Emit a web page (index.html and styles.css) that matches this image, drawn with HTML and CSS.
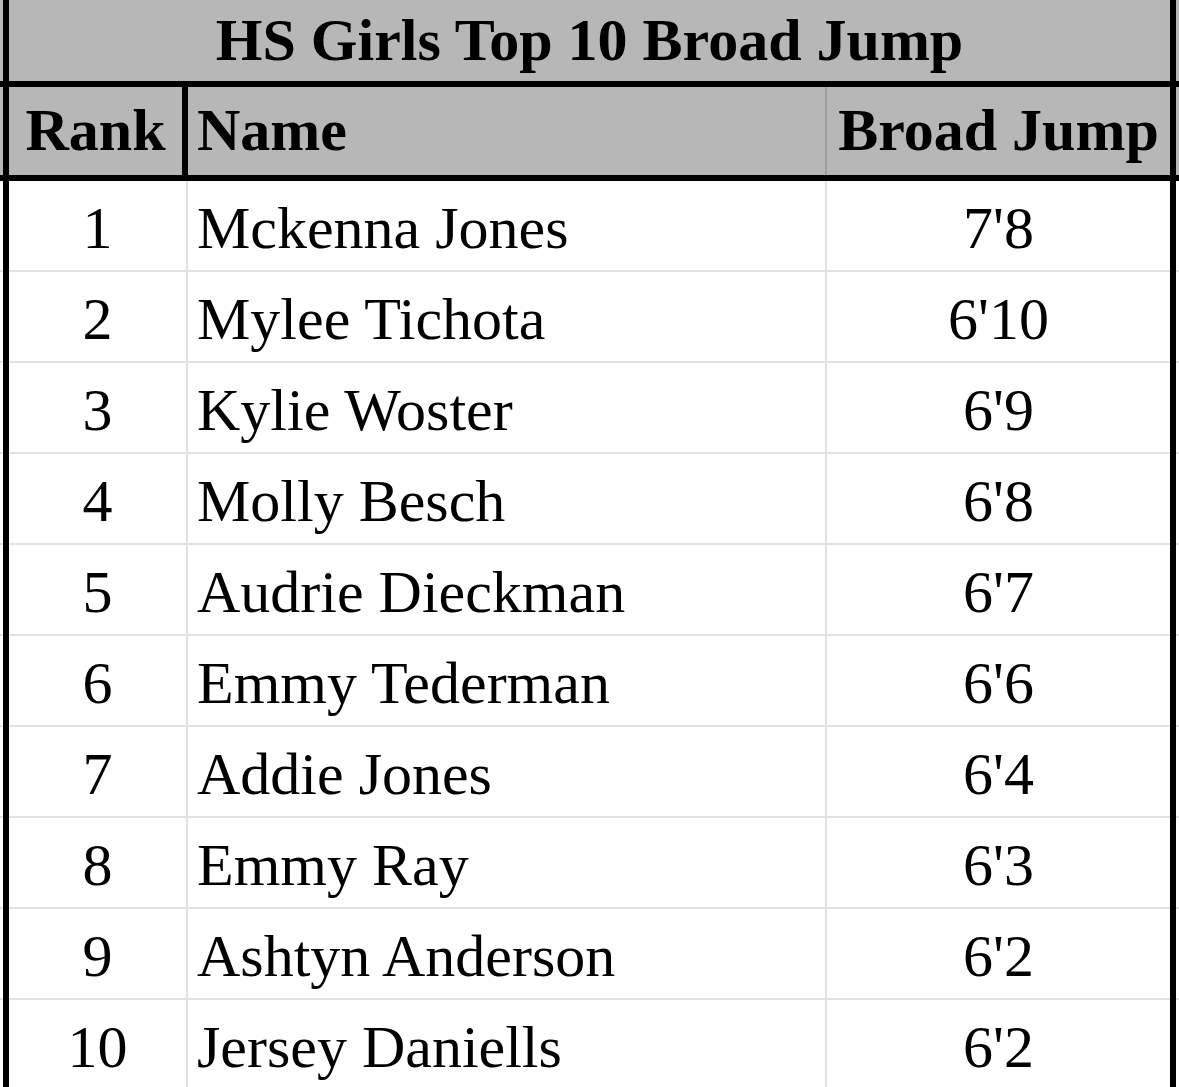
FILE: index.html
```html
<!DOCTYPE html>
<html lang="en">
<head>
<meta charset="utf-8">
<title>HS Girls Top 10 Broad Jump</title>
<link rel="stylesheet" href="styles.css">
</head>
<body>
<div class="sheet">
  <div class="row row-title">
    <div class="inner">
      <div class="cell cell-title">HS Girls Top 10 Broad Jump</div>
    </div>
  </div>
  <div class="row row-head">
    <div class="inner grid">
      <div class="cell head c-rank">Rank</div>
      <div class="cell head c-name">Name</div>
      <div class="cell head c-jump">Broad Jump</div>
    </div>
  </div>
  <div class="row row-data"><div class="inner grid"><div class="cell c-rank">1</div><div class="cell c-name">Mckenna Jones</div><div class="cell c-jump">7'8</div></div></div>
  <div class="row row-data"><div class="inner grid"><div class="cell c-rank">2</div><div class="cell c-name">Mylee Tichota</div><div class="cell c-jump">6'10</div></div></div>
  <div class="row row-data"><div class="inner grid"><div class="cell c-rank">3</div><div class="cell c-name">Kylie Woster</div><div class="cell c-jump">6'9</div></div></div>
  <div class="row row-data"><div class="inner grid"><div class="cell c-rank">4</div><div class="cell c-name">Molly Besch</div><div class="cell c-jump">6'8</div></div></div>
  <div class="row row-data"><div class="inner grid"><div class="cell c-rank">5</div><div class="cell c-name">Audrie Dieckman</div><div class="cell c-jump">6'7</div></div></div>
  <div class="row row-data"><div class="inner grid"><div class="cell c-rank">6</div><div class="cell c-name">Emmy Tederman</div><div class="cell c-jump">6'6</div></div></div>
  <div class="row row-data"><div class="inner grid"><div class="cell c-rank">7</div><div class="cell c-name">Addie Jones</div><div class="cell c-jump">6'4</div></div></div>
  <div class="row row-data"><div class="inner grid"><div class="cell c-rank">8</div><div class="cell c-name">Emmy Ray</div><div class="cell c-jump">6'3</div></div></div>
  <div class="row row-data"><div class="inner grid"><div class="cell c-rank">9</div><div class="cell c-name">Ashtyn Anderson</div><div class="cell c-jump">6'2</div></div></div>
  <div class="row row-data"><div class="inner grid"><div class="cell c-rank">10</div><div class="cell c-name">Jersey Daniells</div><div class="cell c-jump">6'2</div></div></div>
</div>
</body>
</html>
```

FILE: styles.css
```css
html, body {
  margin: 0;
  padding: 0;
  background: #ffffff;
  height: 1087px;
  overflow: hidden;
}

.sheet {
  width: 1179px;
  font-family: "Liberation Serif", "Times New Roman", serif;
  font-size: 60px;
  line-height: 60px;
  color: #000;
}

.row {
  box-sizing: border-box;
  padding: 0 3px;
}

.inner {
  box-sizing: border-box;
  height: 100%;
  border-left: 6px solid #000;
  border-right: 6px solid #000;
}

.grid {
  display: grid;
  grid-template-columns: 179px 639px 343px;
}

.cell {
  box-sizing: border-box;
  display: flex;
  align-items: flex-end;
  white-space: nowrap;
}

/* title row */
.row-title {
  height: 87px;
  background: #b7b7b7;
  border-bottom: 6px solid #000;
}

.cell-title {
  height: 100%;
  justify-content: center;
  font-weight: bold;
  padding-bottom: 11px;
}

/* header row */
.row-head {
  height: 94px;
  background: #b7b7b7;
  border-bottom: 6px solid #000;
}

.head {
  font-weight: bold;
  padding-bottom: 15px;
}

.row-head .c-rank {
  border-right: 6px solid #000;
}

.row-head .c-name {
  border-right: 2px solid #9e9e9e;
}

/* data rows */
.row-data {
  height: 91px;
  background: linear-gradient(to top, #e2e2e2 2px, #ffffff 2px);
}

.row-data .cell {
  padding-bottom: 12px;
  border-bottom: 2px solid #e2e2e2;
}

.row-data .c-rank,
.row-data .c-name {
  border-right: 2px solid #e2e2e2;
}

.c-rank {
  justify-content: center;
}

.c-name {
  justify-content: flex-start;
  padding-left: 9px;
}

.c-jump {
  justify-content: center;
}
```
